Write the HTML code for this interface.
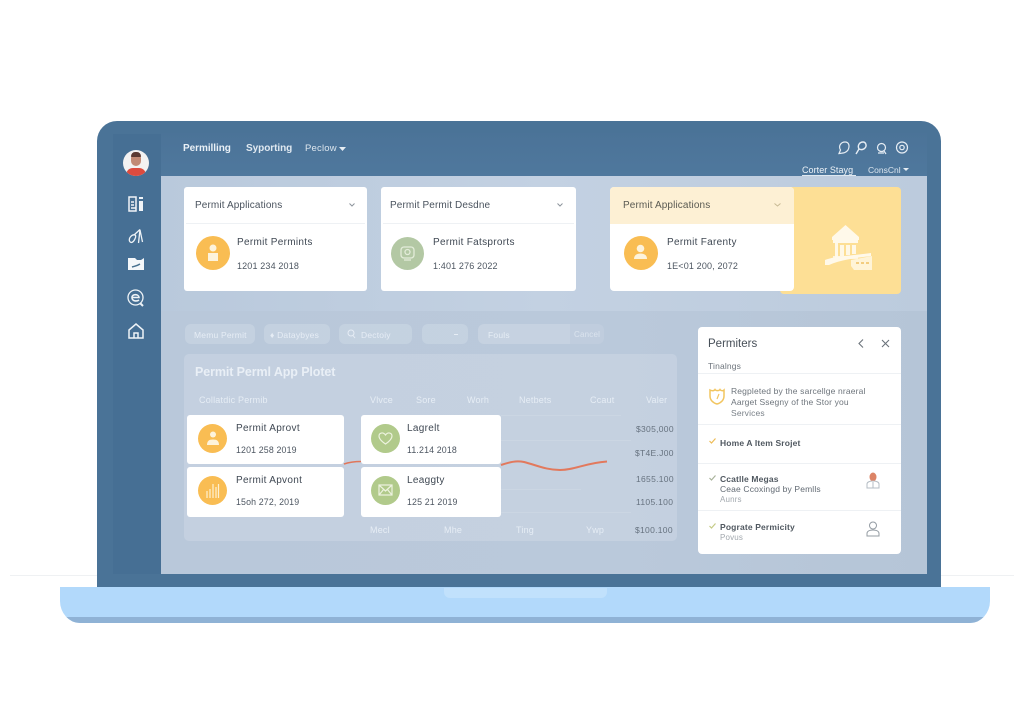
<!DOCTYPE html>
<html lang="en"><head><meta charset="utf-8"><title>Permit dashboard</title>
<style>
html,body{margin:0;padding:0;background:#fff}
body{width:1024px;height:701px;overflow:hidden;position:relative;font-family:"Liberation Sans",sans-serif}
.a{position:absolute}
.t{position:absolute;white-space:nowrap;line-height:12px;transform:translateY(-5px);filter:blur(.35px)}
.card{position:absolute;background:#fff;border-radius:3px}
.pill{position:absolute;top:324px;height:20px;background:rgba(255,255,255,.17);border-radius:6px}
.c{position:absolute;border-radius:50%}
.d{font-size:9px;color:#4d5661;letter-spacing:.15px}
.h{font-size:10px;color:#4a535e;letter-spacing:.12px}
.k{font-size:10px;color:#3f4853;letter-spacing:.3px}
.w{color:#e6edf5;font-size:9px;letter-spacing:.2px}
.v{font-size:8.5px;color:#66727f;letter-spacing:.3px}
.p{font-size:8.5px;color:#626a73;letter-spacing:.15px}
.b{font-size:8.5px;color:#505860;font-weight:bold;letter-spacing:.15px}
.l{position:absolute;height:1px;background:#eef1f4}
.g{position:absolute;height:1px;background:rgba(255,255,255,.11)}
svg{position:absolute;overflow:visible}
</style></head><body>

<div class="a" style="left:10px;top:575px;width:1004px;height:1px;background:#eff1f3"></div>

<!-- lid -->
<div class="a" style="left:97px;top:121px;width:844px;height:467px;background:#4a7397;border-radius:20px 20px 0 0"></div>
<div class="a" style="left:113px;top:134px;width:48px;height:440px;background:#466f94"></div>
<div class="a" style="left:161px;top:133px;width:766px;height:43px;background:linear-gradient(#4b7398,#4f789d)"></div>
<div class="a" style="left:161px;top:176px;width:766px;height:135px;background:linear-gradient(90deg,#b9c9dc,#c3d1e2 50%,#bccbdd)"></div>
<div class="a" style="left:161px;top:311px;width:766px;height:263px;background:linear-gradient(90deg,#b9c8da,#bac9db 60%,#b5c5d7)"></div>

<!-- avatar -->
<div class="c" style="left:123px;top:150px;width:26px;height:26px;background:#f3f2f2;overflow:hidden">
<div class="a" style="left:8px;top:3px;width:10px;height:13px;border-radius:5px;background:#c28a75"></div>
<div class="a" style="left:8px;top:2px;width:10px;height:5px;border-radius:5px 5px 1px 1px;background:#5b3a33"></div>
<div class="a" style="left:3px;top:18px;width:20px;height:10px;border-radius:7px 7px 0 0;background:#dc4b3f"></div>
</div>

<!-- sidebar icons -->
<svg style="left:128px;top:196px" width="16" height="16" viewBox="0 0 16 16" fill="none" stroke="#f0f4f8" stroke-width="1.5"><path d="M1 1H8V15H1Z"/><path d="M3 6H6M3 9H6"/><path d="M11 1H15V3H11ZM11 5H15V15H11Z" fill="#f0f4f8" stroke="none"/><path d="M3 12H8" /></svg>
<svg style="left:128px;top:228px" width="16" height="16" viewBox="0 0 16 16" fill="none" stroke="#eef3f7" stroke-width="1.3"><path d="M1.5 13C.5 10 4 6 7 7 9 8 6 14 3.5 14.5 2.500 14.500 2 14 1.500 13Z"/><path d="M6 7 12 1.500M12 1.500 10.500 15M12 2 14.500 14"/></svg>
<svg style="left:128px;top:257px" width="16" height="14" viewBox="0 0 16 14"><path d="M0 1H7L9 3H13L16 1V13H0Z" fill="#f4f7fa"/><path d="M4 10C7 9 9 9 12 7" stroke="#47708f" stroke-width="1.500" fill="none"/></svg>
<svg style="left:127px;top:289px" width="18" height="18" viewBox="0 0 18 18" fill="none" stroke="#eef3f7" stroke-width="1.300"><circle cx="8.500" cy="8.500" r="7.500"/><path d="M5 8.500H12C12 5 5 4.500 5 8.500 5 12.500 10 12.500 12 11" stroke-width="1.600"/><path d="M13 14 16 17" stroke-width="2"/></svg>
<svg style="left:128px;top:323px" width="16" height="16" viewBox="0 0 16 16" fill="none" stroke="#eef3f7" stroke-width="1.500"><path d="M1 7 8 1 15 7V15H1Z"/><path d="M6 15V10H10V15"/></svg>

<!-- nav -->
<div class="t" style="left:183px;top:148px;font-size:10px;font-weight:bold;color:#e9f0f6;letter-spacing:-.05px">Permilling</div>
<div class="t" style="left:246px;top:148px;font-size:10px;font-weight:bold;color:#e0e9f1;letter-spacing:-.05px">Syporting</div>
<div class="t" style="left:305px;top:148px;font-size:9.500px;color:#dbe5ee;letter-spacing:.2px">Peclow</div>
<svg style="left:339px;top:147px" width="7" height="4"><path d="M0 0H7L3.500 4Z" fill="#e6edf3"/></svg>

<svg style="left:838px;top:141px" width="70" height="14" viewBox="0 0 70 14" fill="none" stroke="#e6edf4" stroke-width="1.200">
<path d="M1 12.500 2.500 9C0 5 3 1 7 1 11 1 12 5 10 9 8 12 5 12 1 12.500Z"/>
<path d="M18 13 21 8M21 8C19 4 22 1 25 1 28 1 29 5 27 7 25 9 23 9 21 8Z" stroke-width="1.400"/>
<circle cx="43.500" cy="6.500" r="4"/><path d="M46 10 48 13M40 12H46"/>
<circle cx="64" cy="6.500" r="5.500"/><circle cx="64" cy="6.500" r="2.200"/>
</svg>
<div class="t" style="left:802px;top:169px;font-size:9px;color:#edf2f7;letter-spacing:.05px">Corter Stayg</div>
<div class="a" style="left:802px;top:175px;width:54px;height:1px;background:#dfe8f0"></div>
<div class="t" style="left:868px;top:169px;font-size:8.500px;color:#dce6ef">ConsCnl</div>
<svg style="left:903px;top:168px" width="6" height="3"><path d="M0 0H6L3 3Z" fill="#e6edf3"/></svg>

<!-- top cards -->
<div class="card" style="left:184px;top:187px;width:183px;height:104px"></div>
<div class="l" style="left:186px;top:223px;width:179px"></div>
<div class="t h" style="left:195px;top:204.500px">Permit Applications</div>
<svg style="left:349px;top:203px" width="6" height="4" fill="none" stroke="#8d949c"><path d="M.5 .5 3 3 5.500 .5"/></svg>
<div class="c" style="left:196px;top:236px;width:34px;height:34px;background:#f9bd53"></div>
<svg style="left:205px;top:244px" width="16" height="18" fill="#fdf3dc"><circle cx="8" cy="4" r="3.500"/><path d="M3 9H13V17H3Z"/></svg>
<div class="t k" style="left:237px;top:242px">Permit Permints</div>
<div class="t d" style="left:237px;top:265px">1201 234 2018</div>

<div class="card" style="left:380.500px;top:187px;width:195.500px;height:104px"></div>
<div class="l" style="left:383px;top:223px;width:191px"></div>
<div class="t h" style="left:390px;top:204.500px">Permit Permit Desdne</div>
<svg style="left:557px;top:203px" width="6" height="4" fill="none" stroke="#8d949c"><path d="M.5 .5 3 3 5.500 .5"/></svg>
<div class="c" style="left:390.500px;top:236.500px;width:33.500px;height:33.500px;background:#b3c8a4"></div>
<svg style="left:400px;top:246px" width="15" height="15" fill="none" stroke="#e3ecd9" stroke-width="1.300"><rect x="1" y="1" width="13" height="11" rx="3"/><circle cx="7.500" cy="6" r="2.500"/><path d="M4 14H11"/></svg>
<div class="t k" style="left:433px;top:242px">Permit Fatsprorts</div>
<div class="t d" style="left:433px;top:265px">1:401 276 2022</div>

<div class="a" style="left:780px;top:187px;width:121px;height:107px;background:#fddf95;border-radius:4px"></div>
<div class="card" style="left:610px;top:187px;width:184px;height:104px;border-radius:4px;overflow:hidden"><div class="a" style="left:0;top:0;width:184px;height:37px;background:#fdf0d4"></div></div>
<div class="t h" style="left:623px;top:204.500px;color:#5a5a52">Permit Applications</div>
<svg style="left:774px;top:203px" width="7" height="4" fill="none" stroke="#c7b993"><path d="M.5 .5 3.500 3 6.500 .5"/></svg>
<div class="c" style="left:623.500px;top:236px;width:34px;height:34px;background:#f9bd53"></div>
<svg style="left:632px;top:244px" width="17" height="17" fill="#fdf3dc"><circle cx="8.500" cy="4.500" r="3.800"/><path d="M2 15C2 11 5 9.500 8.500 9.500 12 9.500 15 11 15 15Z"/></svg>
<div class="t k" style="left:667px;top:242px">Permit Farenty</div>
<div class="t d" style="left:667px;top:265px">1E&lt;01 200, 2072</div>
<svg style="left:825px;top:225px" width="48" height="46" viewBox="0 0 48 46" fill="#fff9ea">
<path d="M7 12 20.500 0 34 12V15H7Z"/><path d="M8 15H33V18H8Z"/><path d="M10 18H13V33H10ZM15 20H19V31H15ZM21 20H25V30H21ZM27 20H31V29H27Z" opacity=".95"/><path d="M8 31H33V34H8Z" opacity=".85"/>
<path d="M0 35C10 31 24 31 46 28V31C30 33 15 35 4 40H0Z"/><path d="M26 35 47 31V45H29L26 41Z" fill="#fff4d7"/><path d="M31 38H34M36 38H39M41 38H44" stroke="#f3cd80" stroke-width="2"/>
</svg>

<!-- toolbar -->
<div class="pill" style="left:185px;width:70px"></div><div class="t w" style="left:194px;top:334px;font-size:8.500px">Memu Permit</div>
<div class="pill" style="left:264px;width:66px"></div><div class="t w" style="left:270px;top:334px;font-size:8.500px">&#9830; Dataybyes</div>
<div class="pill" style="left:339px;width:73px"></div>
<svg style="left:347px;top:329px" width="9" height="10" fill="none" stroke="#e6edf5"><circle cx="4" cy="4" r="3"/><path d="M6 6.500 8 9"/></svg>
<div class="t w" style="left:361px;top:334px;font-size:8.500px">Dectoiy</div>
<div class="pill" style="left:422px;width:46px"></div><div class="a" style="left:454px;top:334px;width:4px;height:1px;background:#e6edf5"></div>
<div class="pill" style="left:478px;width:126px;background:rgba(255,255,255,.09)"></div>
<div class="a" style="left:478px;top:324px;width:92px;height:20px;background:rgba(255,255,255,.1);border-radius:6px 0 0 6px"></div>
<div class="t w" style="left:488px;top:334px;font-size:8.500px">Fouls</div>
<div class="t w" style="left:574px;top:334px;font-size:8px;opacity:.7">Cancel</div>

<!-- table -->
<div class="a" style="left:184px;top:354px;width:493px;height:187px;background:rgba(255,255,255,.16);border-radius:5px"></div>
<div class="t" style="left:195px;top:371px;font-size:12.500px;font-weight:bold;color:#e9eff6;letter-spacing:-.1px">Permit Perml App Plotet</div>
<div class="t w" style="left:199px;top:399px">Collatdic Permib</div>
<div class="t w" style="left:370px;top:399px">Vlvce</div>
<div class="t w" style="left:416px;top:399px">Sore</div>
<div class="t w" style="left:467px;top:399px">Worh</div>
<div class="t w" style="left:519px;top:399px">Netbets</div>
<div class="t w" style="left:590px;top:399px">Ccaut</div>
<div class="t w" style="left:646px;top:399px">Valer</div>

<div class="g" style="left:501px;top:415px;width:120px"></div>
<div class="g" style="left:501px;top:440px;width:130px"></div>
<div class="g" style="left:501px;top:489px;width:80px"></div>
<div class="g" style="left:501px;top:512px;width:130px"></div>

<svg style="left:0;top:0" width="1024" height="701" fill="none"><path d="M344 464C350 462 355 461.500 361 461.500" stroke="#e0765a" stroke-width="1.600"/><path d="M501 465C510 462 516 460.500 524 462 536 465 546 470 560 470 575 470 585 463 607 461.500" stroke="#e2795d" stroke-width="2"/></svg>

<div class="card" style="left:187px;top:415px;width:157px;height:49px"></div>
<div class="card" style="left:187px;top:467px;width:157px;height:49.500px"></div>
<div class="card" style="left:361px;top:415px;width:140px;height:49px"></div>
<div class="card" style="left:361px;top:467px;width:140px;height:49.500px"></div>

<div class="c" style="left:198px;top:424px;width:29px;height:29px;background:#f9bd53"></div>
<svg style="left:206px;top:431px" width="14" height="15" fill="#fdf3dc"><circle cx="7" cy="3.500" r="3"/><path d="M1 14C1 10 3 8.500 7 8.500 11 8.500 13 10 13 14Z"/></svg>
<div class="c" style="left:198px;top:476px;width:29px;height:29px;background:#f9bd53"></div>
<svg style="left:205px;top:482px" width="15" height="17" fill="none" stroke="#fdf0d0" stroke-width="1.200"><path d="M2 9V16M5 7V16M8 2V16M11 5V16M13.500 2V16"/></svg>
<div class="c" style="left:371px;top:424px;width:28.500px;height:29px;background:#b1ca8b"></div>
<svg style="left:378px;top:431px" width="15" height="14" fill="none" stroke="#edf3df" stroke-width="1.200"><path d="M7.500 13C3 10 1 7.500 1 5 1 2 5 .5 7.500 4 10 .5 14 2 14 5 14 7.500 12 10 7.500 13Z"/></svg>
<div class="c" style="left:371px;top:476px;width:28.500px;height:29px;background:#b1ca8b"></div>
<svg style="left:378px;top:484px" width="15" height="12" fill="none" stroke="#edf3df" stroke-width="1.200"><rect x="1" y="1" width="13" height="10"/><path d="M1 1 7.500 7 14 1M1 11 6 5M14 11 9 5"/></svg>

<div class="t k" style="left:236px;top:428px">Permit Aprovt</div>
<div class="t d" style="left:236px;top:449px;font-size:8.800px">1201 258 2019</div>
<div class="t k" style="left:236px;top:480px">Permit Apvont</div>
<div class="t d" style="left:236px;top:500.500px;font-size:8.800px">15oh 272, 2019</div>
<div class="t k" style="left:407px;top:428px">Lagrelt</div>
<div class="t d" style="left:407px;top:449px;font-size:8.800px">11.214 2018</div>
<div class="t k" style="left:407px;top:480px">Leaggty</div>
<div class="t d" style="left:407px;top:500.500px;font-size:8.800px">125 21 2019</div>

<div class="t v" style="left:636px;top:428px">$305,000</div>
<div class="t v" style="left:635px;top:452px">$T4E.J00</div>
<div class="t v" style="left:636px;top:478px">1655.100</div>
<div class="t v" style="left:636px;top:501px">1105.100</div>
<div class="t v" style="left:635px;top:529px">$100.100</div>
<div class="t w" style="left:370px;top:529px">Mecl</div>
<div class="t w" style="left:444px;top:529px">Mhe</div>
<div class="t w" style="left:516px;top:529px">Ting</div>
<div class="t w" style="left:586px;top:529px">Ywp</div>

<!-- side panel -->
<div class="card" style="left:698px;top:327px;width:203px;height:227px;border-radius:4px"></div>
<div class="t" style="left:708px;top:343px;font-size:11.500px;color:#474f58">Permiters</div>
<svg style="left:858px;top:339px" width="30" height="9" fill="none" stroke="#6b737b" stroke-width="1.100"><path d="M5 .5 1 4.500 5 8.500"/><path d="M24 1 31 8M31 1 24 8"/></svg>
<div class="t p" style="left:708px;top:365px;color:#6d747c">Tinalngs</div>
<div class="l" style="left:698px;top:373px;width:203px"></div>
<svg style="left:709px;top:388px" width="16" height="17" fill="none" stroke="#f2c55f" stroke-width="1.500"><path d="M1 2C3 3 5 3 6 1.500 7 3 10 3 11 1.500 12 3 14 3 15 2V8C15 12 12 15 8 16 4 15 1 12 1 8Z"/><path d="M10 6 8 11" stroke-width="1.200"/></svg>
<div class="t p" style="left:731px;top:389.500px;color:#6e757c">Regpleted by the sarcellge nraeral</div>
<div class="t p" style="left:731px;top:400.500px;color:#6e757c">Aarget Ssegny of the Stor you</div>
<div class="t p" style="left:731px;top:411.500px;color:#7a8188">Services</div>
<div class="l" style="left:698px;top:424px;width:203px"></div>
<svg style="left:709px;top:438px" width="7" height="6" fill="none" stroke="#eebc56" stroke-width="1.200"><path d="M.5 3 2.500 5 6.500 .5"/></svg>
<div class="t b" style="left:720px;top:441.500px">Home A Item Srojet</div>
<div class="l" style="left:698px;top:463px;width:203px"></div>
<svg style="left:709px;top:475px" width="7" height="6" fill="none" stroke="#a9b39b" stroke-width="1.200"><path d="M.5 3 2.500 5 6.500 .5"/></svg>
<div class="t b" style="left:720px;top:477.500px">Ccatlle Megas</div>
<div class="t p" style="left:720px;top:488px">Ceae Ccoxingd by Pemlls</div>
<div class="t p" style="left:720px;top:498.500px;font-size:8px;color:#a2a8ae">Aunrs</div>
<svg style="left:866px;top:472px" width="14" height="17" fill="none" stroke="#b4bcc4"><ellipse cx="7" cy="5" rx="3.500" ry="4.500" fill="#dc8466" stroke="none"/><path d="M1 16V12C1 10 4 9 7 9 10 9 13 10 13 12V16Z"/><path d="M7 10V16"/></svg>
<div class="l" style="left:698px;top:510px;width:203px"></div>
<svg style="left:709px;top:523px" width="7" height="6" fill="none" stroke="#c5cb86" stroke-width="1.200"><path d="M.5 3 2.500 5 6.500 .5"/></svg>
<div class="t b" style="left:720px;top:526px">Pograte Permicity</div>
<div class="t p" style="left:720px;top:537px;font-size:8px;color:#a2a8ae">Povus</div>
<svg style="left:866px;top:521px" width="14" height="16" fill="none" stroke="#949ca3"><circle cx="7" cy="4.500" r="3.500"/><path d="M1 15V12.500C1 10 4 9 7 9 10 9 13 10 13 12.500V15Z"/></svg>

<!-- base -->
<div class="a" style="left:60px;top:587px;width:930px;height:36px;background:#b2d9fb;border-radius:0 0 20px 20px/0 0 22px 22px;overflow:hidden">
<div class="a" style="left:0;top:30px;width:930px;height:6px;background:#8fb2d5"></div>
<div class="a" style="left:384px;top:1px;width:163px;height:10px;background:#c1e1fc;border-radius:0 0 6px 6px"></div>
</div>
</body></html>
